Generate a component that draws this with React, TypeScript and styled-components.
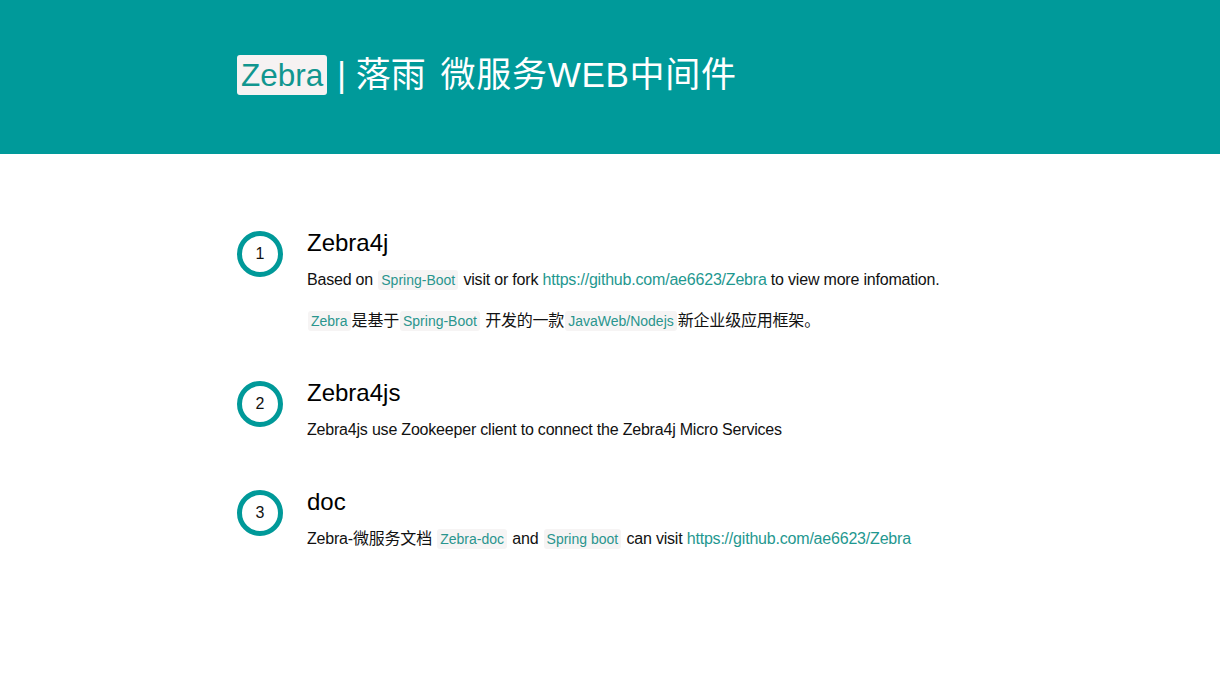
import React from "react";
import styled, { createGlobalStyle } from "styled-components";

const GlobalStyle = createGlobalStyle`
  html, body { margin: 0; padding: 0; background: #ffffff; }
  body { font-family: "Liberation Sans", Arial, "Noto Sans CJK SC", sans-serif; color: #111; }
`;

const Header = styled.header`
  background: #009a9a;
  height: 154px;
  box-sizing: border-box;
  padding-top: 54px;
`;

const Container = styled.div`
  width: 746px;
  margin: 0 auto;
`;

const Title = styled.h1`
  margin: 0;
  font-weight: normal;
  font-size: 35px;
  line-height: 42px;
  color: #ffffff;
  font-family: "Liberation Sans", Arial, "Noto Sans CJK SC", sans-serif;
  white-space: nowrap;
`;

const Brand = styled.span`
  display: inline-block;
  background: #f6f2f2;
  color: #11968f;
  font-size: 31.5px;
  line-height: 40px;
  padding: 0 4px;
  border-radius: 3px;
  vertical-align: top;
  margin-top: 1px;
`;

const Slogan = styled.span`
  word-spacing: 5px;
`;

const Wide = styled.span`
  word-spacing: 0;
  letter-spacing: 0.7px;
`;

const Main = styled.main`
  padding-top: 77px;
`;

const List = styled.ol`
  list-style: none;
  margin: 0;
  padding: 0;
  display: flex;
  flex-direction: column;
  gap: 48px;
`;

const Item = styled.li`
  display: flex;
  gap: 24px;
`;

const Badge = styled.div`
  flex: none;
  width: 46px;
  height: 46px;
  box-sizing: border-box;
  border: 5px solid #009999;
  border-radius: 50%;
  display: flex;
  align-items: center;
  justify-content: center;
  font-size: 16px;
  color: #111;
`;

const Body = styled.div`
  display: flex;
  flex-direction: column;
  gap: 17px;
`;

const ItemTitle = styled.h2`
  margin: 0 0 -4px;
  font-weight: normal;
  font-size: 24px;
  line-height: 24px;
  color: #000;
`;

const Para = styled.p`
  margin: 0;
  font-size: 16px;
  line-height: 24px;
  letter-spacing: -0.2px;
  color: #111;
  white-space: nowrap;
`;

const Code = styled.code`
  font-family: "Liberation Sans", Arial, "Noto Sans CJK SC", sans-serif;
  font-size: 14px;
  letter-spacing: 0;
  color: #2a958e;
  background: #f6f4f4;
  border-radius: 3px;
  padding: 2px 3px;
  margin: 0 1px;
`;

const Link = styled.a`
  color: #1f9890;
  text-decoration: none;
`;

const URL = "https://github.com/ae6623/Zebra";

export default function App() {
  return (
    <>
      <GlobalStyle />
      <Header>
        <Container>
          <Title>
            <Brand>Zebra</Brand> | <Slogan>落雨 <Wide>微服务WEB中间件</Wide></Slogan>
          </Title>
        </Container>
      </Header>
      <Main>
        <Container>
          <List>
            <Item>
              <Badge>1</Badge>
              <Body>
                <ItemTitle>Zebra4j</ItemTitle>
                <Para>
                  Based on <Code>Spring-Boot</Code> visit or fork <Link href={URL}>{URL}</Link> to view more infomation.
                </Para>
                <Para>
                  <Code>Zebra</Code>是基于<Code>Spring-Boot</Code> 开发的一款<Code>JavaWeb/Nodejs</Code>新企业级应用框架。
                </Para>
              </Body>
            </Item>
            <Item>
              <Badge>2</Badge>
              <Body>
                <ItemTitle>Zebra4js</ItemTitle>
                <Para>Zebra4js use Zookeeper client to connect the Zebra4j Micro Services</Para>
              </Body>
            </Item>
            <Item>
              <Badge>3</Badge>
              <Body>
                <ItemTitle>doc</ItemTitle>
                <Para>
                  Zebra-微服务文档 <Code>Zebra-doc</Code> and <Code>Spring boot</Code> can visit <Link href={URL}>{URL}</Link>
                </Para>
              </Body>
            </Item>
          </List>
        </Container>
      </Main>
    </>
  );
}
